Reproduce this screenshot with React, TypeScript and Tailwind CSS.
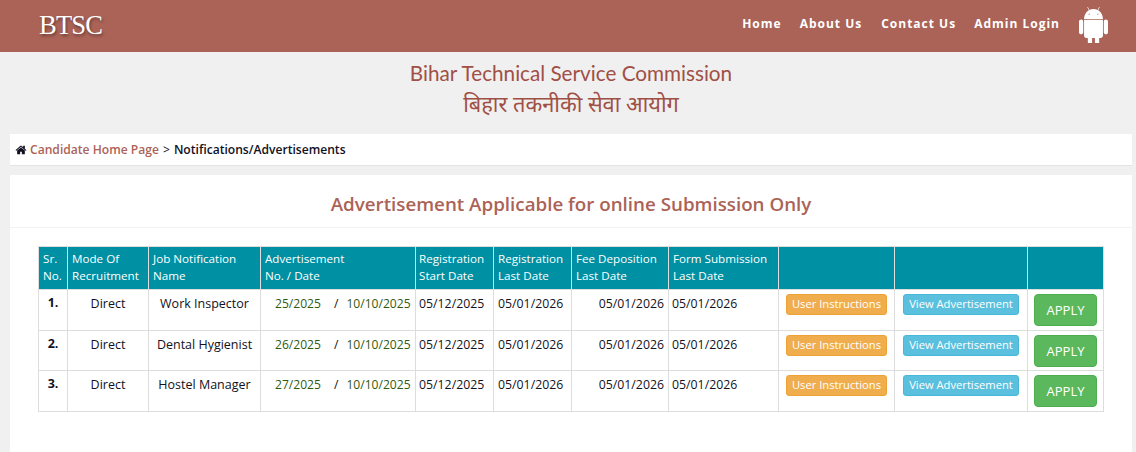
import React from 'react';

const rows = [
  { sr: '1.', job: 'Work Inspector', adv: '25/2025', h: 'h-[41px]' },
  { sr: '2.', job: 'Dental Hygienist', adv: '26/2025', h: 'h-[40px]' },
  { sr: '3.', job: 'Hostel Manager', adv: '27/2025', h: 'h-[41px]' },
];

const HomeIcon = () => (
  <svg viewBox="0 0 1792 1792" className="w-[12px] h-[12px] fill-[#111122] -ml-[1px]">
    <path d="M1472 992v480q0 26-19 45t-45 19h-384v-384h-256v384h-384q-26 0-45-19t-19-45v-480q0-1 .5-3t.5-3l575-474 575 474q1 2 1 6zm223-69l-62 74q-8 9-21 11h-3q-13 0-21-7l-692-577-692 577q-12 8-24 7-13-2-21-11l-62-74q-8-10-7-23.5t11-21.5l719-599q32-26 76-26t76 26l244 204v-195q0-14 9-23t23-9h192q14 0 23 9t9 23v408l219 182q10 8 11 21.5t-7 23.5z" />
  </svg>
);

const AndroidIcon = () => (
  <svg viewBox="0 140 1408 1530" preserveAspectRatio="none" className="w-[29px] h-[36px] fill-white -mt-[2px]">
    <path d="M103 667q42 0 72 30t30 72v430q0 43-29.500 73t-72.500 30-73-30-30-73v-430q0-42 30-72t73-30zm1060 19v666q0 46-32 78t-77 32h-75v227q0 43-30 73t-73 30-73-30-30-73v-227h-138v227q0 43-30 73t-73 30q-42 0-72-30t-30-73l-1-227h-74q-46 0-78-32t-32-78v-666h918zm-232-405q107 55 171 153.500t64 215.500h-925q0-117 64-215.500t172-153.500l-71-131q-7-13 5-20 13-6 20 6l72 132q95-42 201-42t201 42l72-132q7-12 20-6 12 7 5 20zm477 488v430q0 43-30 73t-73 30q-42 0-72-30t-30-73v-430q0-43 30-72.500t72-29.500q43 0 73 29.500t30 72.500z" />
    <circle cx="493" cy="444" r="26" fill="#ab6357" />
    <circle cx="915" cy="444" r="26" fill="#ab6357" />
  </svg>
);

const App: React.FC = () => {
  const th = 'border border-[#ddd] px-[4px] py-[3px] text-left font-normal align-top';
  const td = 'border border-[#ddd] px-[4px] pt-[5px] align-top';
  const date = 'text-[12.3px]';

  return (
    <div className="min-h-[452px] h-[452px] overflow-hidden bg-[#f0f0f0] font-['Open_Sans',sans-serif] text-[#111122]">
      {/* top bar */}
      <div className="flex items-center justify-between h-[52px] bg-[#ab6357] pl-[39px] pr-[28px]">
        <div className="font-['Liberation_Serif',serif] text-[26.5px] text-white tracking-[-0.8px] [text-shadow:1px_2px_3px_rgba(0,0,0,0.4)] -mt-[1px]">
          BTSC
        </div>
        <div className="flex items-center text-white text-[12px] font-bold tracking-[1px]">
          <div className="flex -mt-[4px]">
            <a className="mr-[18px]">Home</a>
            <a className="mr-[19px]">About Us</a>
            <a className="mr-[18px]">Contact Us</a>
            <a className="mr-[19px]">Admin Login</a>
          </div>
          <AndroidIcon />
        </div>
      </div>

      <div className="pl-[10px] pr-[4px]">
        {/* commission title */}
        <div className="h-[82px] pt-[6px] text-center text-[#a04f45] font-['Lato','Noto_Sans',sans-serif] leading-[30px]">
          <div className="text-[20.7px]">Bihar Technical Service Commission</div>
          <div className="mt-[1px] text-[21.8px]">बिहार तकनीकी सेवा आयोग</div>
        </div>

        {/* breadcrumb */}
        <div className="flex items-center h-[32px] px-[6px] pt-[1px] bg-white border-b border-[#e4e4e4] text-[12.1px] font-semibold">
          <HomeIcon />
          <span className="ml-[3px] text-[#ab6357]">Candidate Home Page</span>
          <span className="mx-[4px] font-normal">&gt;</span>
          <span>Notifications/Advertisements</span>
        </div>

        {/* main panel */}
        <div className="mt-[9px] bg-white h-[400px]">
          <div className="h-[53px] pt-[14px] border-b border-[#f2f2f2] text-center text-[18.75px] leading-[29px] font-semibold text-[#ab6357]">
            Advertisement Applicable for online Submission Only
          </div>
          <div className="px-[28px] pt-[18px]">
            <table className="w-full table-fixed border-collapse text-[12.5px] leading-[17px]">
              <colgroup>
                <col className="w-[29px]" />
                <col className="w-[81px]" />
                <col className="w-[112px]" />
                <col className="w-[155px]" />
                <col className="w-[78px]" />
                <col className="w-[78px]" />
                <col className="w-[97px]" />
                <col className="w-[110px]" />
                <col className="w-[116px]" />
                <col className="w-[133px]" />
                <col className="w-[76px]" />
              </colgroup>
              <thead>
                <tr className="h-[43px] bg-[#0090a3] text-white text-[11.65px]">
                  <th className={th}>Sr.<br />No.</th>
                  <th className={th}>Mode Of<br />Recruitment</th>
                  <th className={th}>Job Notification<br />Name</th>
                  <th className={th}>Advertisement<br />No. / Date</th>
                  <th className={`${th} !pl-[3px]`}>Registration<br />Start Date</th>
                  <th className={th}>Registration<br />Last Date</th>
                  <th className={th}>Fee Deposition<br />Last Date</th>
                  <th className={th}>Form Submission<br />Last Date</th>
                  <th className={th}></th>
                  <th className={th}></th>
                  <th className={th}></th>
                </tr>
              </thead>
              <tbody>
                {rows.map((r) => (
                  <tr key={r.sr} className={r.h}>
                    <td className={`${td} text-center font-bold !pt-[4px]`}>{r.sr}</td>
                    <td className={`${td} text-center`}>Direct</td>
                    <td className={`${td} text-center whitespace-nowrap`}>{r.job}</td>
                    <td className={`${td} whitespace-nowrap`}>
                      <div className="flex pl-[10px] text-[12.1px] text-[#2f5a10]">
                        <span>{r.adv}</span>
                        <span className="ml-[13px] mr-[8px] text-[#111122]">/</span>
                        <span>10/10/2025</span>
                      </div>
                    </td>
                    <td className={`${td} ${date} !pl-[3px]`}>05/12/2025</td>
                    <td className={`${td} ${date}`}>05/01/2026</td>
                    <td className={`${td} ${date} text-right`}>05/01/2026</td>
                    <td className={`${td} ${date} !pl-[3px]`}>05/01/2026</td>
                    <td className={`${td} !pt-[4px] text-center`}>
                      <button className="w-[101px] h-[21px] pb-[2px] rounded-[3px] bg-[#f0ad4e] border border-[#eea236] text-white text-[11.2px] leading-[17px]">
                        User Instructions
                      </button>
                    </td>
                    <td className={`${td} !pt-[4px] text-center`}>
                      <button className="w-[116px] h-[21px] pb-[2px] rounded-[3px] bg-[#5bc0de] border border-[#46b8da] text-white text-[11.2px] leading-[17px]">
                        View Advertisement
                      </button>
                    </td>
                    <td className={`${td} !pt-[4px] text-center`}>
                      <button className="w-[63px] h-[32px] rounded-[4px] bg-[#5cb85c] border border-[#4cae4c] text-white text-[13px]">
                        APPLY
                      </button>
                    </td>
                  </tr>
                ))}
              </tbody>
            </table>
          </div>
        </div>
      </div>
    </div>
  );
};

export default App;
